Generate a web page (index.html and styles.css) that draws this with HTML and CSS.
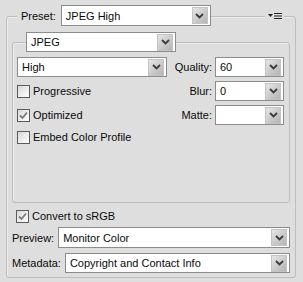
FILE: index.html
```html
<!DOCTYPE html>
<html lang="en">
<head>
    <meta charset="UTF-8">
    <title>Save for Web - JPEG Settings</title>
    <link rel="stylesheet" href="styles.css">
</head>
<body>

<div class="panel">
    <div class="group outer">
        <div class="group-head">
            <span class="head-label">Preset:</span>
            <div class="combo preset-combo">
                <span class="value">JPEG High</span>
                <span class="drop"><svg width="9" height="6" viewBox="0 0 9 6"><path d="M1 1 L4.5 4.5 L8 1" fill="none" stroke="#3c3c3c" stroke-width="1.8"/></svg></span>
            </div>
            <span class="head-fill"></span>
            <span class="menu-icon">
                <svg width="14" height="8" viewBox="0 0 14 8"><path d="M0 2 H5 L2.5 5 Z" fill="#222"/><path d="M6 1.5 H14 M6 4 H14 M6 6.5 H14" stroke="#222" stroke-width="1.2"/></svg>
            </span>
        </div>

        <div class="group inner">
            <div class="group-head inner-head">
                <div class="combo format-combo">
                    <span class="value">JPEG</span>
                    <span class="drop"><svg width="9" height="6" viewBox="0 0 9 6"><path d="M1 1 L4.5 4.5 L8 1" fill="none" stroke="#3c3c3c" stroke-width="1.8"/></svg></span>
                </div>
            </div>

            <div class="opt-row">
                <div class="combo quality-combo">
                    <span class="value">High</span>
                    <span class="drop"><svg width="9" height="6" viewBox="0 0 9 6"><path d="M1 1 L4.5 4.5 L8 1" fill="none" stroke="#3c3c3c" stroke-width="1.8"/></svg></span>
                </div>
                <span class="side-label">Quality:</span>
                <div class="combo small-combo">
                    <span class="value">60</span>
                    <span class="drop"><svg width="9" height="6" viewBox="0 0 9 6"><path d="M1 1 L4.5 4.5 L8 1" fill="none" stroke="#3c3c3c" stroke-width="1.8"/></svg></span>
                </div>
            </div>

            <div class="opt-row">
                <label class="check"><span class="box"></span>Progressive</label>
                <span class="side-label">Blur:</span>
                <div class="combo small-combo">
                    <span class="value">0</span>
                    <span class="drop"><svg width="9" height="6" viewBox="0 0 9 6"><path d="M1 1 L4.5 4.5 L8 1" fill="none" stroke="#3c3c3c" stroke-width="1.8"/></svg></span>
                </div>
            </div>

            <div class="opt-row">
                <label class="check"><span class="box checked"><svg width="11" height="11" viewBox="0 0 11 11"><path d="M2 5.5 L4.5 8 L9 2.5" fill="none" stroke="#7a7a7a" stroke-width="1.8"/></svg></span>Optimized</label>
                <span class="side-label">Matte:</span>
                <div class="combo small-combo">
                    <span class="value"></span>
                    <span class="drop"><svg width="9" height="6" viewBox="0 0 9 6"><path d="M1 1 L4.5 4.5 L8 1" fill="none" stroke="#3c3c3c" stroke-width="1.8"/></svg></span>
                </div>
            </div>

            <div class="opt-row embed-row">
                <label class="check"><span class="box"></span>Embed Color Profile</label>
            </div>
        </div>

        <label class="check convert"><span class="box checked"><svg width="11" height="11" viewBox="0 0 11 11"><path d="M2 5.5 L4.5 8 L9 2.5" fill="none" stroke="#7a7a7a" stroke-width="1.8"/></svg></span>Convert to sRGB</label>

        <div class="bottom-row preview-row">
            <span class="row-label">Preview:</span>
            <div class="combo wide-combo">
                <span class="value">Monitor Color</span>
                <span class="drop"><svg width="9" height="6" viewBox="0 0 9 6"><path d="M1 1 L4.5 4.5 L8 1" fill="none" stroke="#3c3c3c" stroke-width="1.8"/></svg></span>
            </div>
        </div>
        <div class="bottom-row">
            <span class="row-label">Metadata:</span>
            <div class="combo wide-combo">
                <span class="value">Copyright and Contact Info</span>
                <span class="drop"><svg width="9" height="6" viewBox="0 0 9 6"><path d="M1 1 L4.5 4.5 L8 1" fill="none" stroke="#3c3c3c" stroke-width="1.8"/></svg></span>
            </div>
        </div>
    </div>
</div>

</body>
</html>
```

FILE: styles.css
```css
body {
    margin: 0;
    background-color: #dedede;
    font-family: "Liberation Sans", Arial, sans-serif;
    font-size: 11px;
    color: #0a0a0a;
}
.panel {
    padding: 16px 7px 0 6px;
}
.group {
    border: 1px solid #bdbdbd;
    border-radius: 3px;
    box-shadow: inset 1px 1px 0 #ececec;
}
.outer {
    padding: 0 5px 4px 0;
}
.group-head {
    display: flex;
    align-items: center;
    height: 21px;
    margin-top: -12px;
    padding-left: 10px;
}
.head-label {
    background-color: #dedede;
    padding: 0 5px 0 4px;
}
.head-fill {
    flex: 1;
}
.menu-icon {
    display: flex;
    background-color: #dedede;
    padding: 0 2px 0 3px;
    margin-right: 6px;
}
.combo {
    display: flex;
    align-items: center;
    height: 20px;
    box-sizing: border-box;
    border: 1px solid #8c8c8c;
    background-color: #fff;
}
.combo .value {
    flex: 1;
    padding-left: 4px;
    white-space: nowrap;
}
.combo .drop {
    display: flex;
    align-items: center;
    justify-content: center;
    width: 14px;
    height: 15px;
    margin-right: 2px;
    background: linear-gradient(135deg, #e6e6e6, #b4b4b4);
    border: 1px solid #c4c4c4;
}
.preset-combo {
    width: 150px;
    height: 21px;
}
.inner {
    margin: 16px 0 0 5px;
    height: 161px;
    box-sizing: border-box;
    padding: 0 5px 0 4px;
}
.inner-head {
    margin-top: -11px;
    height: 20px;
    padding-left: 9px;
}
.format-combo {
    width: 150px;
}
.opt-row {
    display: flex;
    align-items: center;
    height: 20px;
    margin-top: 4px;
}
.inner-head + .opt-row {
    margin-top: 5px;
}
.quality-combo {
    width: 150px;
}
.opt-row .check {
    width: 150px;
}
.side-label {
    flex: 1;
    text-align: right;
    padding-right: 3px;
}
.small-combo {
    width: 69px;
}
.embed-row {
    height: 16px;
}
.check {
    display: flex;
    align-items: center;
}
.box {
    display: flex;
    align-items: center;
    justify-content: center;
    width: 13px;
    height: 13px;
    box-sizing: border-box;
    border: 1px solid #5c5c5c;
    background: linear-gradient(135deg, #d8d8d8, #ffffff);
    margin-right: 3px;
}
.convert {
    margin: 5px 0 0 9px;
    height: 16px;
}
.bottom-row {
    display: flex;
    align-items: center;
    margin: 5px 0 0 5px;
}
.preview-row {
    margin-top: 3px;
}
.preview-row .combo {
    height: 21px;
}
.bottom-row .row-label {
    padding-right: 4px;
}
.wide-combo {
    flex: 1;
}
```
